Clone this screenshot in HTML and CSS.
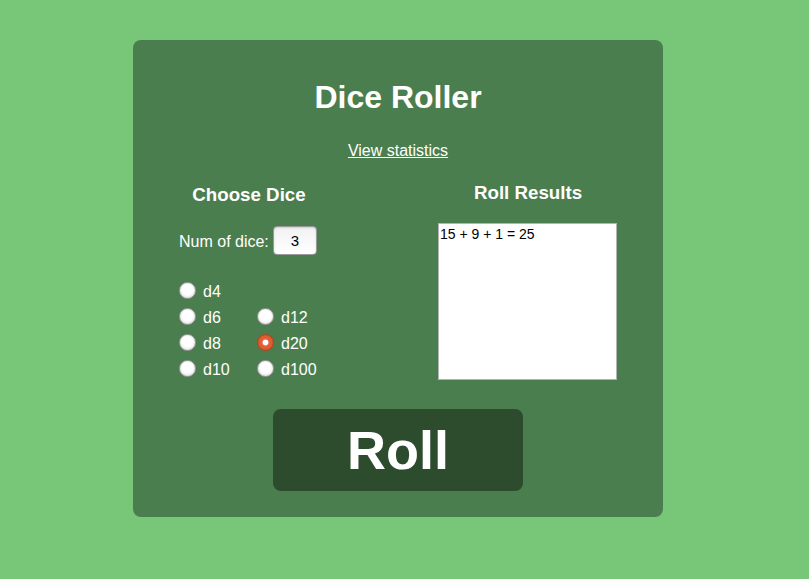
FILE: index.html
```html
<!DOCTYPE html>
<html>
<head>
<meta charset="utf-8">
<link rel="stylesheet" href="styles.css">
</head>
<body>
<div class="card">
  <h1 class="title">Dice Roller</h1>
  <div class="links"><a href="#" class="stats-link">View statistics</a></div>
  <div class="columns">
    <div class="col col-left">
      <h3 class="col-title">Choose Dice</h3>
      <div class="num-row">
        <label class="num-label" for="num">Num of dice:</label>
        <input class="num-input" id="num" type="text" value="3">
      </div>
      <div class="dice-grid">
        <label class="die"><input type="radio" name="die" class="radio"><span>d4</span></label>
        <span class="empty"></span>
        <label class="die"><input type="radio" name="die" class="radio"><span>d6</span></label>
        <label class="die"><input type="radio" name="die" class="radio"><span>d12</span></label>
        <label class="die"><input type="radio" name="die" class="radio"><span>d8</span></label>
        <label class="die"><input type="radio" name="die" class="radio" checked><span>d20</span></label>
        <label class="die"><input type="radio" name="die" class="radio"><span>d10</span></label>
        <label class="die"><input type="radio" name="die" class="radio"><span>d100</span></label>
      </div>
    </div>
    <div class="col col-right">
      <h3 class="col-title">Roll Results</h3>
      <textarea class="results" readonly>15 + 9 + 1 = 25</textarea>
    </div>
  </div>
  <div class="btn-row"><button class="roll-btn">Roll</button></div>
</div>
</body>
</html>
```
FILE: styles.css
```css
html, body {
  margin: 0;
  padding: 0;
}
body {
  background: #78c677;
  font-family: "Liberation Sans", Arial, sans-serif;
  color: #fff;
  height: 579px;
  overflow: hidden;
}
.card {
  box-sizing: border-box;
  width: 530px;
  margin: 40px 0 0 133px;
  background: #4b7e4e;
  border-radius: 8px;
  padding: 39px 0 26px;
}
.title {
  margin: 0;
  font-size: 32px;
  line-height: 37px;
  font-weight: bold;
  text-align: center;
}
.links {
  margin-top: 26px;
  text-align: center;
  font-size: 16px;
  line-height: 18px;
}
.stats-link {
  color: #fff;
  text-decoration: underline;
}
.columns {
  display: flex;
  justify-content: space-between;
  padding: 0 45px 0 46px;
  margin-top: 22px;
}
.col {
  display: flex;
  flex-direction: column;
}
.col-left {
  width: 140px;
  padding-top: 2px;
}
.col-right {
  width: 180px;
}
.col-title {
  margin: 0;
  font-size: 18.72px;
  line-height: 22px;
  font-weight: bold;
  text-align: center;
}
.num-row {
  display: flex;
  align-items: center;
  gap: 4px;
  margin-top: 20px;
  font-size: 16px;
}
.num-label {
  line-height: 18px;
  padding-top: 2px;
}
.num-input {
  box-sizing: border-box;
  width: 44px;
  height: 29px;
  border: 1px solid #9a9a9a;
  border-radius: 4px;
  background: linear-gradient(#f2f2f2, #ffffff);
  box-shadow: inset 0 1px 2px rgba(0,0,0,0.15);
  font-family: "Liberation Sans", Arial, sans-serif;
  font-size: 15px;
  text-align: center;
  color: #000;
  padding: 0;
}
.dice-grid {
  display: grid;
  grid-template-columns: 78px 62px;
  grid-auto-rows: 26px;
  margin-top: 22px;
}
.die {
  display: flex;
  align-items: center;
  font-size: 16px;
  line-height: 18px;
}
.die span {
  margin-left: 7px;
  padding-top: 4px;
}
.radio {
  appearance: none;
  -webkit-appearance: none;
  margin: 0;
  width: 17px;
  height: 17px;
  border-radius: 50%;
  border: 1px solid #9c9c9c;
  background: radial-gradient(circle at 50% 45%, #ffffff 0 45%, #f0f0f0 62%, #bcbcbc 100%);
  box-sizing: border-box;
  flex: none;
}
.radio:checked {
  border-color: #a9441f;
  background: radial-gradient(circle, #ffffff 0 2.6px, #e2653a 3.3px, #d9572b 70%, #b9461f 100%);
}
.results {
  box-sizing: border-box;
  width: 179px;
  height: 157px;
  margin-top: 19px;
  border: 1px solid #b3b3b3;
  background: #fff;
  color: #000;
  font-family: "Liberation Sans", Arial, sans-serif;
  font-size: 14px;
  line-height: 16px;
  padding: 2px 1px;
  resize: none;
  outline: none;
}
.btn-row {
  display: flex;
  justify-content: center;
  margin-top: 28px;
}
.roll-btn {
  width: 250px;
  height: 82px;
  border: none;
  border-radius: 8px;
  background: #2d4c2e;
  color: #fff;
  font-family: "Liberation Sans", Arial, sans-serif;
  font-weight: bold;
  font-size: 54px;
  line-height: 62px;
  padding: 0;
}
```
